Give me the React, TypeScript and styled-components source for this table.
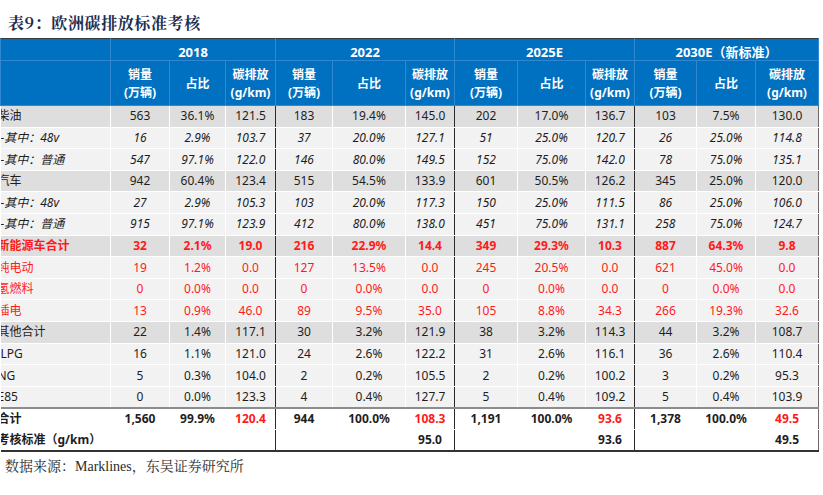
import React from 'react'
import styled, { createGlobalStyle, css } from 'styled-components'

const GlobalStyle = createGlobalStyle`
  html, body {
    margin: 0;
    padding: 0;
    background: #ffffff;
  }
  body {
    width: 823px;
    height: 495px;
    overflow: hidden;
    font-family: "Noto Sans", "Noto Sans CJK SC", sans-serif;
  }
`

type Kind = 'major' | 'sub' | 'red' | 'redMajor' | 'plain' | 'total' | 'standard'

interface Row {
  label: string
  kind: Kind
  vals: string[]
}

const groups = ['2018', '2022', '2025E', '2030E（新标准）']
const widths = [110, 59, 56, 50, 57, 73, 49, 63, 68, 49, 62, 59, 63]

const rows: Row[] = [
  { label: '柴油', kind: 'major', vals: ['563', '36.1%', '121.5', '183', '19.4%', '145.0', '202', '17.0%', '136.7', '103', '7.5%', '130.0'] },
  { label: '-其中：48v', kind: 'sub', vals: ['16', '2.9%', '103.7', '37', '20.0%', '127.1', '51', '25.0%', '120.7', '26', '25.0%', '114.8'] },
  { label: '-其中：普通', kind: 'sub', vals: ['547', '97.1%', '122.0', '146', '80.0%', '149.5', '152', '75.0%', '142.0', '78', '75.0%', '135.1'] },
  { label: '汽车', kind: 'major', vals: ['942', '60.4%', '123.4', '515', '54.5%', '133.9', '601', '50.5%', '126.2', '345', '25.0%', '120.0'] },
  { label: '-其中：48v', kind: 'sub', vals: ['27', '2.9%', '105.3', '103', '20.0%', '117.3', '150', '25.0%', '111.5', '86', '25.0%', '106.0'] },
  { label: '-其中：普通', kind: 'sub', vals: ['915', '97.1%', '123.9', '412', '80.0%', '138.0', '451', '75.0%', '131.1', '258', '75.0%', '124.7'] },
  { label: '新能源车合计', kind: 'redMajor', vals: ['32', '2.1%', '19.0', '216', '22.9%', '14.4', '349', '29.3%', '10.3', '887', '64.3%', '9.8'] },
  { label: '纯电动', kind: 'red', vals: ['19', '1.2%', '0.0', '127', '13.5%', '0.0', '245', '20.5%', '0.0', '621', '45.0%', '0.0'] },
  { label: '氢燃料', kind: 'red', vals: ['0', '0.0%', '0.0', '0', '0.0%', '0.0', '0', '0.0%', '0.0', '0', '0.0%', '0.0'] },
  { label: '插电', kind: 'red', vals: ['13', '0.9%', '46.0', '89', '9.5%', '35.0', '105', '8.8%', '34.3', '266', '19.3%', '32.6'] },
  { label: '其他合计', kind: 'major', vals: ['22', '1.4%', '117.1', '30', '3.2%', '121.9', '38', '3.2%', '114.3', '44', '3.2%', '108.7'] },
  { label: 'LPG', kind: 'plain', vals: ['16', '1.1%', '121.0', '24', '2.6%', '122.2', '31', '2.6%', '116.1', '36', '2.6%', '110.4'] },
  { label: 'NG', kind: 'plain', vals: ['5', '0.3%', '104.0', '2', '0.2%', '105.5', '2', '0.2%', '100.2', '3', '0.2%', '95.3'] },
  { label: 'E85', kind: 'plain', vals: ['0', '0.0%', '123.3', '4', '0.4%', '127.7', '5', '0.4%', '109.2', '5', '0.4%', '103.9'] },
  { label: '合计', kind: 'total', vals: ['1,560', '99.9%', '120.4', '944', '100.0%', '108.3', '1,191', '100.0%', '93.6', '1,378', '100.0%', '49.5'] },
  { label: '考核标准（g/km）', kind: 'standard', vals: ['', '', '', '', '', '95.0', '', '', '93.6', '', '', '49.5'] },
]

const Page = styled.div`
  width: 823px;
  display: flex;
  flex-direction: column;
`

const Title = styled.h1`
  margin: 0;
  height: 38px;
  box-sizing: border-box;
  padding: 14px 0 0 8px;
  font-family: "Noto Serif CJK SC", "Liberation Serif", "Noto Sans CJK SC", serif;
  font-size: 16px;
  line-height: 18px;
  font-weight: 700;
  letter-spacing: 0.6px;
  color: #1d2c4c;
`

const Table = styled.table`
  width: 818px;
  table-layout: fixed;
  border-collapse: collapse;
  border-top: 1px solid #3a3a3a;
  border-right: 1px solid #6a6a6a;
  border-bottom: 2px solid #333333;
  font-size: 12px;
`

const Col = styled.col<{ $w: number }>`
  width: ${(p) => p.$w}px;
`

const HeadCell = styled.th<{ $group?: boolean; $tall?: boolean }>`
  background: #0070c0;
  color: #ffffff;
  font-weight: 700;
  padding: ${(p) => (p.$tall ? '5px 0 0' : '6px 0 0')};
  text-align: center;
  vertical-align: top;
  border: 1px solid #3187d2;
  border-top: none;
  height: ${(p) => (p.$tall ? '39px' : '15px')};
  font-size: ${(p) => (p.$tall ? '12px' : '13px')};
  line-height: ${(p) => (p.$tall ? '18px' : '15px')};
  ${(p) => p.$group && css`border-left: 1px solid #2b2b2b;`}
`

const MidText = styled.span`
  display: block;
  padding-top: 9px;
`

const BodyRow = styled.tr<{ $kind: Kind }>`
  height: 21.62px;
  background: ${(p) =>
    p.$kind === 'major' || p.$kind === 'redMajor'
      ? '#dedede'
      : p.$kind === 'total' || p.$kind === 'standard'
        ? '#ffffff'
        : '#f2f2f2'};
  color: ${(p) => (p.$kind === 'red' || p.$kind === 'redMajor' ? '#ff1a1a' : '#1e1e1e')};
  font-style: ${(p) => (p.$kind === 'sub' ? 'italic' : 'normal')};
  font-weight: ${(p) =>
    p.$kind === 'redMajor' || p.$kind === 'total' || p.$kind === 'standard' ? 700 : 400};
  ${(p) => p.$kind === 'total' && css`border-top: 2px solid #8c8c8c;`}
`

const Cell = styled.td<{ $group?: boolean; $alert?: boolean; $open?: boolean }>`
  padding: 0;
  text-align: center;
  vertical-align: middle;
  line-height: 20px;
  white-space: nowrap;
  border-left: 1px solid ${(p) => (p.$open ? 'transparent' : '#ffffff')};
  border-bottom: 1px solid ${(p) => (p.$open ? 'transparent' : '#ffffff')};
  ${(p) => p.$group && css`border-left: 1px solid #2b2b2b;`}
  ${(p) => p.$alert && css`color: #ff1a1a;`}
`

const LabelCell = styled.td<{ $open?: boolean }>`
  padding: 0;
  overflow: hidden;
  white-space: nowrap;
  line-height: 20px;
  border-bottom: 1px solid ${(p) => (p.$open ? 'transparent' : '#ffffff')};
`

const LabelText = styled.span<{ $shift: number }>`
  display: block;
  margin-left: ${(p) => p.$shift}px;
`

const Source = styled.p`
  margin: 7px 0 0 5px;
  font-family: "Liberation Serif", "Noto Serif CJK SC", "Noto Sans CJK SC", serif;
  font-size: 14px;
  line-height: 16px;
  color: #2b2b2b;
`

const subHeads = [
  <>销量<br />(万辆)</>,
  <MidText>占比</MidText>,
  <>碳排放<br />(g/km)</>,
]

export default function App() {
  return (
    <Page>
      <GlobalStyle />
      <Title>表9：欧洲碳排放标准考核</Title>
      <Table>
        <colgroup>
          {widths.map((w, i) => (
            <Col key={i} $w={w} />
          ))}
        </colgroup>
        <thead>
          <tr>
            <HeadCell />
            {groups.map((g, i) => (
              <HeadCell key={g} colSpan={3} $group={i > 0}>
                {g}
              </HeadCell>
            ))}
          </tr>
          <tr>
            <HeadCell $tall />
            {groups.map((g, gi) =>
              subHeads.map((h, si) => (
                <HeadCell key={`${g}-${si}`} $tall $group={gi > 0 && si === 0}>
                  {h}
                </HeadCell>
              )),
            )}
          </tr>
        </thead>
        <tbody>
          {rows.map((r, ri) => {
            const open = r.kind === 'total' || r.kind === 'standard'
            return (
              <BodyRow key={ri} $kind={r.kind}>
                <LabelCell $open={open}>
                  <LabelText $shift={r.kind === 'sub' || r.label === 'LPG' ? 0 : -3}>{r.label}</LabelText>
                </LabelCell>
                {r.vals.map((v, vi) => (
                  <Cell
                    key={vi}
                    $open={open}
                    $group={vi > 0 && vi % 3 === 0}
                    $alert={r.kind === 'total' && vi % 3 === 2}
                  >
                    {v}
                  </Cell>
                ))}
              </BodyRow>
            )
          })}
        </tbody>
      </Table>
      <Source>数据来源：Marklines，东吴证券研究所</Source>
    </Page>
  )
}
